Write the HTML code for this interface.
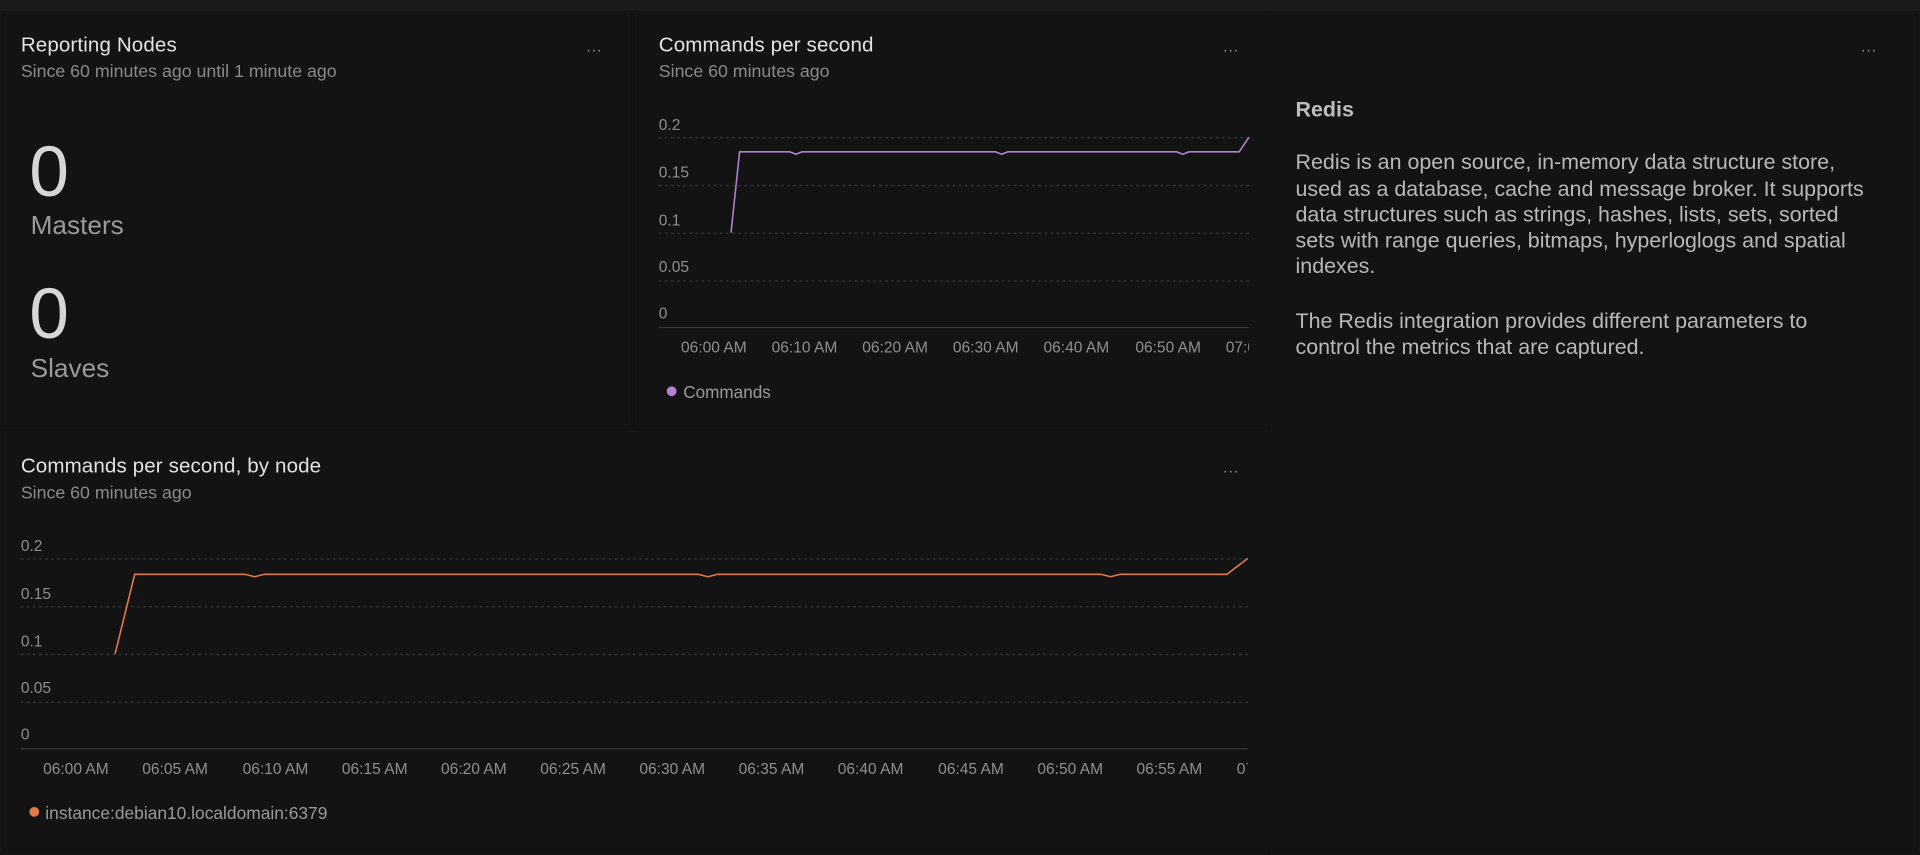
<!DOCTYPE html>
<html><head><meta charset="utf-8"><style>
html,body{margin:0;padding:0;background:#121212;width:1920px;height:854px;overflow:hidden}
#root{position:absolute;left:0;top:0;width:1568px;height:698px;transform:scale(1.22449);transform-origin:0 0;font-family:"Liberation Sans",sans-serif;color:#ccc;background:#121212}
.top{position:absolute;left:0;top:0;width:1568px;height:9px;background:#1b1b1b}
.p{position:absolute;background:#131313;border:1px solid #171717;box-sizing:border-box}
.t{position:absolute;font-size:16.8px;color:#e2e2e2;letter-spacing:0.1px}
.s{position:absolute;font-size:14.5px;color:#8a8a8a}
.dots{position:absolute;font-size:12px;color:#999;letter-spacing:1px}
.big{position:absolute;font-size:58px;color:#d6d6d6;font-weight:300;line-height:1}
.lbl{position:absolute;font-size:21.4px;color:#9a9a9a}
.red{position:absolute;left:1058px;top:79px;width:470px;font-size:17.5px;line-height:21.3px;color:#b8b8b8}
svg text{font-family:"Liberation Sans",sans-serif;font-size:12.7px;fill:#8f8f8f}
</style></head><body><div id="root">
<div class="top"></div>
<div class="p" style="left:0;top:10px;width:514px;height:337px"></div>
<div class="p" style="left:519px;top:10px;width:516px;height:337px"></div>
<div class="p" style="left:1038px;top:10px;width:530px;height:688px"></div>
<div class="p" style="left:0;top:352px;width:1035px;height:346px"></div>

<div class="t" style="left:17px;top:27px">Reporting Nodes</div>
<div class="s" style="left:17px;top:51px">Since 60 minutes ago until 1 minute ago</div>
<div class="dots" style="left:479px;top:31px">...</div>
<div class="big" style="left:24px;top:112px">0</div>
<div class="lbl" style="left:25px;top:172px">Masters</div>
<div class="big" style="left:24px;top:228px">0</div>
<div class="lbl" style="left:25px;top:289px">Slaves</div>

<div class="t" style="left:538px;top:27px">Commands per second</div>
<div class="s" style="left:538px;top:51px">Since 60 minutes ago</div>
<div class="dots" style="left:999px;top:31px">...</div>
<svg style="position:absolute;left:0;top:0" width="1568" height="698">
<g stroke="#3a3a3a" stroke-dasharray="2,3" stroke-width="1">
<line x1="538" x2="1020" y1="112.5" y2="112.5"/><line x1="538" x2="1020" y1="151.5" y2="151.5"/><line x1="538" x2="1020" y1="190.5" y2="190.5"/><line x1="538" x2="1020" y1="229.5" y2="229.5"/>
<line x1="17" x2="1019" y1="456.5" y2="456.5"/><line x1="17" x2="1019" y1="495.5" y2="495.5"/><line x1="17" x2="1019" y1="534.5" y2="534.5"/><line x1="17" x2="1019" y1="573.5" y2="573.5"/>
</g>
<line x1="538" x2="1020" y1="267.5" y2="267.5" stroke="#3c3c3c"/>
<line x1="17" x2="1019" y1="611.5" y2="611.5" stroke="#3c3c3c"/>
<text x="538" y="106">0.2</text><text x="538" y="145">0.15</text><text x="538" y="184">0.1</text><text x="538" y="222">0.05</text><text x="538" y="260">0</text>
<g text-anchor="middle"><text x="583" y="288">06:00 AM</text><text x="657" y="288">06:10 AM</text><text x="731" y="288">06:20 AM</text><text x="805" y="288">06:30 AM</text><text x="879" y="288">06:40 AM</text><text x="954" y="288">06:50 AM</text></g>
<svg x="990" y="270" width="30" height="25" overflow="hidden"><text x="11" y="18">07:00</text></svg>
<polyline fill="none" stroke="#b07fd0" stroke-width="1.3" points="597,190 604,124 645,124 650,126 655,124 813,124 818,126 823,124 961,124 966,126 971,124 1012,124 1020,112"/>
<circle cx="548.5" cy="319.5" r="4" fill="#b57fd4"/>
<text x="558" y="325" style="font-size:14px;fill:#9a9a9a">Commands</text>

<text x="17" y="450">0.2</text><text x="17" y="489">0.15</text><text x="17" y="528">0.1</text><text x="17" y="566">0.05</text><text x="17" y="604">0</text>
<g text-anchor="middle"><text x="62" y="632">06:00 AM</text><text x="143" y="632">06:05 AM</text><text x="225" y="632">06:10 AM</text><text x="306" y="632">06:15 AM</text><text x="387" y="632">06:20 AM</text><text x="468" y="632">06:25 AM</text><text x="549" y="632">06:30 AM</text><text x="630" y="632">06:35 AM</text><text x="711" y="632">06:40 AM</text><text x="793" y="632">06:45 AM</text><text x="874" y="632">06:50 AM</text><text x="955" y="632">06:55 AM</text></g>
<svg x="1000" y="614" width="19" height="25" overflow="hidden"><text x="10" y="18">07:00</text></svg>
<polyline fill="none" stroke="#e07a48" stroke-width="1.3" points="94,534 110,469 200,469 208,471 216,469 570,469 578,471 586,469 899,469 907,471 915,469 1002,469 1019,456"/>
<circle cx="28" cy="663" r="4" fill="#e07a48"/>
<text x="37" y="669" style="font-size:14.2px;fill:#9a9a9a">instance:debian10.localdomain:6379</text>
</svg>

<div class="t" style="left:17px;top:371px">Commands per second, by node</div>
<div class="s" style="left:17px;top:395px">Since 60 minutes ago</div>
<div class="dots" style="left:999px;top:375px">...</div>

<div class="dots" style="left:1520px;top:31px">...</div>
<div class="red"><div style="font-weight:bold;color:#bdbdbd;margin-bottom:22px">Redis</div>
<div>Redis is an open source, in-memory data structure store, used as a database, cache and message broker. It supports data structures such as strings, hashes, lists, sets, sorted sets with range queries, bitmaps, hyperloglogs and spatial indexes.</div>
<div style="margin-top:23px">The Redis integration provides different parameters to control the metrics that are captured.</div></div>
</div></body></html>
